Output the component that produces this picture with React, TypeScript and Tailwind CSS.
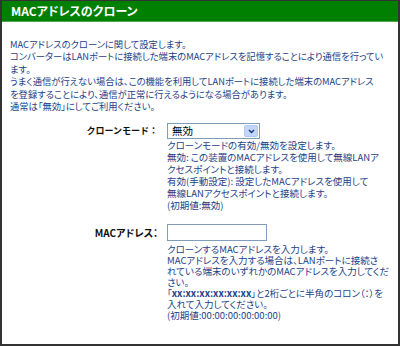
const FONT = "[font-family:'Noto_Sans_CJK_JP',sans-serif]";
const PALT = "[font-feature-settings:'palt']";

const intro = [
  'MACアドレスのクローンに関して設定します。',
  'コンバーターはLANポートに接続した端末のMACアドレスを記憶することにより通信を行ってい',
  'ます。',
  'うまく通信が行えない場合は、この機能を利用してLANポートに接続した端末のMACアドレス',
  'を登録することにより、通信が正常に行えるようになる場合があります。',
  '通常は「無効」にしてご利用ください。',
];

const modeHelp = [
  'クローンモードの有効/無効を設定します。',
  '無効: この装置のMACアドレスを使用して無線LANア',
  'クセスポイントと接続します。',
  '有効(手動設定): 設定したMACアドレスを使用して',
  '無線LANアクセスポイントと接続します。',
  '(初期値:無効)',
];

function Lines({ lines }: { lines: React.ReactNode[] }) {
  return (
    <>
      {lines.map((l, i) => (
        <div key={i} className="whitespace-nowrap">{l}</div>
      ))}
    </>
  );
}

export default function App() {
  const macHelp: React.ReactNode[] = [
    'クローンするMACアドレスを入力します。',
    'MACアドレスを入力する場合は、LANポートに接続さ',
    'れている端末のいずれかのMACアドレスを入力してくだ',
    'さい。',
    <>「<b>xx:xx:xx:xx:xx:xx</b>」と2桁ごとに半角のコロン（：）を</>,
    '入れて入力してください。',
    '(初期値:00:00:00:00:00:00)',
  ];

  return (
    <div className={`w-[400px] h-[346px] bg-white border-[#333] border-t border-x-2 border-b-2 overflow-hidden ${FONT}`}>
      <div className="h-[21px] bg-[#008000] border-b border-[#4da64d] flex items-center pl-[9px]">
        <span className={`text-white font-bold text-[12px] ${PALT}`}>MACアドレスのクローン</span>
      </div>

      <div className={`pl-[8px] pt-[16px] text-[9.3px] leading-[12.4px] text-[#1c3f87] ${PALT}`}>
        <Lines lines={intro} />
      </div>

      <div className="mt-[11px] flex">
        <div className="w-[156px] text-right text-[9px] font-bold text-[#111] pt-[2px] leading-[12px]">クローンモード：</div>
        <div className="ml-[9px]">
          <div className="relative w-[93px] h-[16px] border border-[#7f9db9] bg-white">
            <span className="absolute left-[4px] top-0 text-[10.5px] leading-[14px] text-black">無効</span>
            <span className="absolute right-[1px] top-[1px] w-[14px] h-[12px] rounded-[2px] border border-[#b4c8f0] bg-[#c3d5fb] flex items-center justify-center">
              <svg width="7" height="5" viewBox="0 0 7 5">
                <path d="M1 1 L3.5 3.5 L6 1" stroke="#1d3a7a" strokeWidth="1.5" fill="none" />
              </svg>
            </span>
          </div>
          <div className={`text-[9.5px] leading-[12px] text-[#1c3f87] ${PALT}`}>
            <Lines lines={modeHelp} />
          </div>
        </div>
      </div>

      <div className="mt-[13px] flex">
        <div className={`w-[156px] text-right text-[10px] font-bold text-[#111] pt-[3px] leading-[12px] ${PALT}`}>MACアドレス：</div>
        <div className="ml-[9px]">
          <div className="w-[100px] h-[17px] border border-[#7f9db9] bg-white" />
          <div className={`text-[9.5px] leading-[11px] text-[#1c3f87] pt-[3px] ${PALT}`}>
            <Lines lines={macHelp} />
          </div>
        </div>
      </div>
    </div>
  );
}
